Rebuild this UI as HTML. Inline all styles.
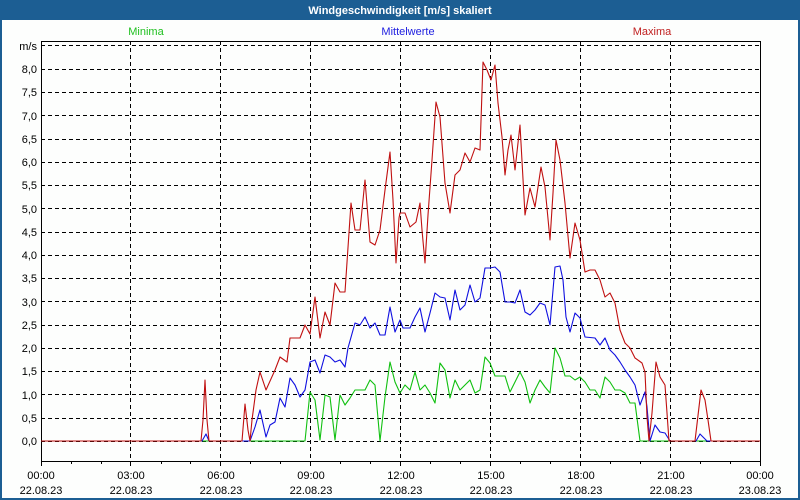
<!DOCTYPE html>
<html><head><meta charset="utf-8"><style>
html,body{margin:0;padding:0;width:800px;height:500px;overflow:hidden;background:#fff}
svg{display:block;font-family:"Liberation Sans",sans-serif}
</style></head><body>
<svg width="800" height="500" viewBox="0 0 800 500" xmlns="http://www.w3.org/2000/svg">
<rect x="0" y="0" width="800" height="500" fill="#1c5e93"/>
<rect x="2" y="20" width="796" height="478" fill="#fdfefd"/>
<text x="400" y="14" text-anchor="middle" fill="#fff" font-size="11" font-weight="bold">Windgeschwindigkeit [m/s] skaliert</text>
<text x="146" y="35" text-anchor="middle" fill="#20c020" font-size="11">Minima</text>
<text x="408" y="35" text-anchor="middle" fill="#2020e0" font-size="11">Mittelwerte</text>
<text x="652" y="35" text-anchor="middle" fill="#c02020" font-size="11">Maxima</text>
<g stroke="#000" stroke-width="1" stroke-dasharray="4,3" fill="none">
<path d="M41 45.5H760M41 69.5H760M41 92.5H760M41 115.5H760M41 139.5H760M41 162.5H760M41 185.5H760M41 208.5H760M41 232.5H760M41 255.5H760M41 278.5H760M41 301.5H760M41 325.5H760M41 348.5H760M41 371.5H760M41 394.5H760M41 418.5H760M41 441.5H760"/>
<path d="M130.5 41V461M220.5 41V461M310.5 41V461M400.5 41V461M490.5 41V461M580.5 41V461M670.5 41V461"/>
</g>
<g stroke="#000" stroke-width="1" fill="none">
<rect x="41.5" y="41.5" width="719" height="420"/>
<path d="M41.5 461v5M71.5 461v3M101.5 461v3M130.5 461v5M161.5 461v3M190.5 461v3M220.5 461v5M250.5 461v3M280.5 461v3M310.5 461v5M340.5 461v3M370.5 461v3M400.5 461v5M430.5 461v3M460.5 461v3M490.5 461v5M520.5 461v3M550.5 461v3M580.5 461v5M610.5 461v3M640.5 461v3M670.5 461v5M700.5 461v3M730.5 461v3M760.5 461v5"/>
</g>
<g font-size="11" fill="#000" text-anchor="end">
<text x="37" y="50">m/s</text>
<text x="37" y="73">8,0</text><text x="37" y="96">7,5</text><text x="37" y="120">7,0</text><text x="37" y="143">6,5</text><text x="37" y="166">6,0</text><text x="37" y="189">5,5</text><text x="37" y="213">5,0</text><text x="37" y="236">4,5</text><text x="37" y="259">4,0</text><text x="37" y="282">3,5</text><text x="37" y="306">3,0</text><text x="37" y="329">2,5</text><text x="37" y="352">2,0</text><text x="37" y="375">1,5</text><text x="37" y="399">1,0</text><text x="37" y="422">0,5</text><text x="37" y="445">0,0</text>
</g>
<g font-size="11" fill="#000" text-anchor="middle">
<text x="41" y="479">00:00</text><text x="41" y="494">22.08.23</text>
<text x="131" y="479">03:00</text><text x="131" y="494">22.08.23</text>
<text x="221" y="479">06:00</text><text x="221" y="494">22.08.23</text>
<text x="311" y="479">09:00</text><text x="311" y="494">22.08.23</text>
<text x="401" y="479">12:00</text><text x="401" y="494">22.08.23</text>
<text x="491" y="479">15:00</text><text x="491" y="494">22.08.23</text>
<text x="581" y="479">18:00</text><text x="581" y="494">22.08.23</text>
<text x="671" y="479">21:00</text><text x="671" y="494">22.08.23</text>
<text x="760" y="479">00:00</text><text x="760" y="494">23.08.23</text>
</g>
<g fill="none" stroke-width="1.1" stroke-linejoin="round">
<polyline stroke="#10c010" points="41,441 305,441 310,392 315,400 320,440 325,395 330,397 335,440 340,395 345,405 350,398 355,390 365,390 370,380 375,385 380,441 385,397 390,362 395,382 400,393 405,385 410,390 415,372 420,390 425,385 430,393 435,403 440,363 445,370 450,398 455,380 460,390 470,380 475,393 480,390 485,357 490,363 495,376 505,376 510,392 515,382 520,372 525,382 530,403 535,390 540,380 545,387 550,393 555,348 560,358 565,376 570,376 575,380 580,377 585,382 590,390 595,390 600,398 605,377 610,382 615,390 620,390 625,393 630,403 635,403 640,441 760,441"/>
<polyline stroke="#1010e0" points="41,441 202,441 206,434 209,441 250,441 255,427 260,410 266,437 270,425 275,422 280,398 285,407 290,378 295,385 300,397 305,390 310,362 315,360 320,373 325,355 330,357 335,362 340,360 345,367 348,348 355,323 360,325 365,317 370,328 375,323 380,335 385,335 390,307 395,332 400,320 403,328 410,328 415,317 420,308 425,332 430,313 435,293 440,297 445,298 450,320 455,290 460,310 465,305 470,285 475,302 480,298 485,268 490,268 495,267 500,272 505,302 510,302 515,303 520,290 525,312 530,315 535,310 540,303 545,305 550,325 555,267 560,266 563,280 566,317 570,332 575,313 580,318 585,337 595,338 600,345 605,338 610,350 615,355 620,362 625,370 630,377 635,385 640,405 645,392 647,407 650,441 655,425 660,432 665,433 670,441 696,441 700,434 707,441 760,441"/>
<polyline stroke="#c01010" points="41,441 201,441 203,420 205,380 207,420 209,441 242,441 245,404 248,430 250,441 252,420 256,390 260,372 266,390 275,370 280,357 287,362 290,338 300,338 305,325 310,334 315,297 320,338 325,312 330,325 335,283 340,292 345,292 351,203 355,230 360,230 365,180 370,242 375,245 380,230 385,190 390,152 393,200 396,263 399,218 400,213 405,213 410,227 416,222 420,203 422,230 425,263 428,215 432,160 436,102 440,117 445,183 450,213 455,175 460,170 465,153 470,162 475,148 480,150 483,62 487,70 491,80 495,65 498,103 502,137 505,175 508,150 511,135 515,170 520,125 525,215 530,188 535,207 541,167 545,187 550,240 553,193 556,140 560,160 565,203 570,258 575,223 580,240 585,272 590,270 595,270 600,280 605,297 610,293 615,303 620,330 625,343 630,348 635,358 642,363 645,372 647,417 649,441 652,413 656,362 660,377 665,385 667,413 669,441 695,441 701,390 705,400 708,420 711,441 760,441"/>
</g>
</svg>
</body></html>
